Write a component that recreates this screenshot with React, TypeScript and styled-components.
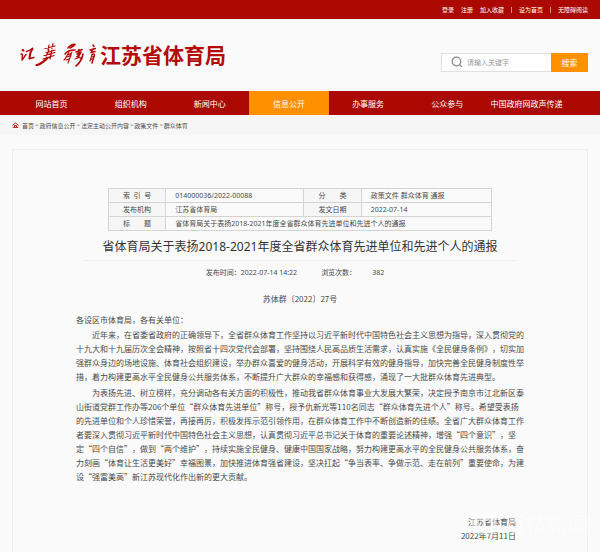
import React from "react";
import styled, { createGlobalStyle } from "styled-components";

const Global = createGlobalStyle`
  * { box-sizing: border-box; }
  html { background: #fafafa; overflow: hidden; }
  body {
    margin: 0;
    background: #fafafa;
    color: #4a4a4a;
    font-family: "Noto Sans", "Noto Sans CJK SC", sans-serif;
    font-size: 7px;
    text-spacing-trim: space-all;
  }
  a { color: inherit; text-decoration: none; }
`;

const TopBar = styled.div`
  display: flex;
  justify-content: flex-end;
  align-items: center;
  gap: 7px;
  height: 19px;
  padding-right: 12px;
  background: #aa0800;
  color: #fff;
  font-size: 6px;
`;

const Separator = styled.span`
  width: 1px;
  height: 6px;
  background: #d98b86;
`;

const Header = styled.header`
  display: flex;
  justify-content: space-between;
  align-items: center;
  height: 72px;
  padding: 0 12px 0 19px;
`;

const Brand = styled.a`
  && { color: #b40a08; }
  display: flex;
  align-items: center;
  gap: 4px;
`;

const BrandName = styled.span`
  font-size: 21px;
  line-height: 30px;
  font-weight: 700;
`;

const Search = styled.form`
  display: flex;
  height: 19px;
  margin-top: 14px;
`;

const SearchField = styled.label`
  display: flex;
  align-items: center;
  gap: 4px;
  width: 110px;
  padding-left: 9px;
  background: #fff;
  border: 1px solid #e0e0e0;
  border-right: 0;
`;

const SearchInput = styled.input`
  flex: 1;
  min-width: 0;
  padding: 0;
  border: 0;
  outline: 0;
  background: transparent;
  font: inherit;
  &::placeholder { color: #999; }
`;

const SearchButton = styled.button`
  width: 37px;
  padding: 0;
  border: 0;
  background: #ff9000;
  color: #fff;
  font-family: inherit;
  font-size: 8px;
`;

const Nav = styled.nav`
  display: flex;
  height: 24px;
  padding: 0 34px 0 12px;
  background: #aa0800;
`;

const NavLink = styled.a<{ $active?: boolean }>`
  && { color: #fff; }
  display: flex;
  flex: 1 1 0;
  min-width: 0;
  align-items: center;
  justify-content: center;
  background: ${(p) => (p.$active ? "#ff9000" : "transparent")};
  font-size: 8px;
  white-space: nowrap;
`;

const Breadcrumb = styled.nav`
  display: flex;
  align-items: center;
  gap: 1px;
  height: 20px;
  padding: 0 12px;
  background: #f6f6f6;
  font-size: 6px;
  svg { margin-right: 2px; }
`;

const Panel = styled.main`
  display: flex;
  flex-direction: column;
  align-items: center;
  margin: 14px 12px 0;
  padding: 38px 20px 20px;
  border: 1px solid #eee;
`;

const InfoTable = styled.table`
  width: 72%;
  table-layout: fixed;
  border-collapse: collapse;
  line-height: 13px;
  th, td { padding: 0; border: 1px solid #d4d4d4; }
  th { background: #f6f6f6; font-weight: 400; white-space: pre; }
  td { padding-left: 9px; }
`;

const Col = styled.col<{ $share: number }>`
  width: ${(p) => p.$share}%;
`;

const Title = styled.h1`
  width: 81%;
  margin: 6px 0 0;
  padding-bottom: 3px;
  border-bottom: 1px solid #eee;
  color: #333;
  font-size: 12px;
  line-height: 20px;
  font-weight: 400;
  text-align: center;
  white-space: nowrap;
`;

const Meta = styled.div`
  display: flex;
  gap: 24px;
  margin-top: 6px;
  padding-right: 10px;
  line-height: 12px;
`;

const Views = styled.span`
  display: flex;
  gap: 16px;
`;

const Article = styled.article`
  margin-top: 13px;
  font-family: "Noto Sans CJK SC", sans-serif;
  font-size: 8px;
  line-height: 14px;
`;

const DocNumber = styled.p`
  margin: 0 0 7px;
  text-align: center;
`;

const Paragraph = styled.p<{ $indent?: boolean }>`
  margin: 0 0 1px;
  text-indent: ${(p) => (p.$indent ? "2em" : "0")};
  & + & { margin-bottom: 2px; }
  span { display: block; white-space: nowrap; }
  span + span { text-indent: 0; }
`;

const Signature = styled.div`
  margin-top: 31px;
  padding-right: 8px;
  text-align: right;
`;

const Watermark = styled.div`
  position: fixed;
  right: 11px;
  bottom: 16px;
  display: flex;
  align-items: center;
  gap: 8px;
  color: rgba(255, 255, 255, 0.45);
  font-size: 21px;
  line-height: 24px;
  font-weight: 700;
  pointer-events: none;
`;

const Calligraphy = () => (
  <svg width="77" height="26" viewBox="0 0 77 26" fill="none" stroke="currentColor" strokeLinecap="round" strokeLinejoin="round" aria-hidden="true">
    <path strokeWidth="2" d="M3.500 8l1 .5M13.500 6.500c-2 3-3 6-3 10" />
    <path strokeWidth="1.400" d="M2 12l1.500.5-.5 5.500c1-1 2-3 4-5.500M7.500 9.500c2-.5 4-1.500 6-3M10.500 16.500l4.500-1" />
    <path strokeWidth="1.200" d="M26 6.500l10-2.500M30 3l-1 5M34 1.500l-1 5M27 10.500c3 0 6-2 9-2.500M30 8l-3 6M25 13.500l11-3M24 17l11-3.500M33 8l-2 9" />
    <path strokeWidth="2.200" d="M17.500 23c4-.5 7-3.500 11-7" />
    <path strokeWidth="1.600" d="M49 6c1-2 5-4 7-3.500-1 1.500-3 2.500-5 3.500M46 12c2-3 7-4 10-4M57 10l6-2.500M58 12l4-2-2 4-2 .5M60 7.500l-1 8M64 12c-1 5-3 9-7 12" />
    <path strokeWidth="1.100" d="M50 10c-2 3-3 6-5 8M49 13c2-2 4-2 3 0l-3 8M48 15l3-1M47 18l3-1M53 10l-2 3M56 17l5-2M61 16l2 1" />
    <path strokeWidth="1.500" d="M74 3l1 1.500M71 8l5.500-1.500M74 7l-2 3.500 4-1M73 12.500c2-1 3-1 2 2l-2 6.500" />
    <path strokeWidth="1.100" d="M73 13l-2 6M73 15l2-.5M72 17.500l2-.5" />
  </svg>
);

const nav = ["网站首页", "组织机构", "新闻中心", "信息公开", "办事服务", "公众参与", "中国政府网政声传递"];
const crumbs = ["首页", "政府信息公开", "法定主动公开内容", "政策文件", "群众体育"];

const paragraphs = [
  ["各设区市体育局，各有关单位："],
  [
    "近年来，在省委省政府的正确领导下，全省群众体育工作坚持以习近平新时代中国特色社会主义思想为指导，深入贯彻党的",
    "十九大和十九届历次全会精神，按照省十四次党代会部署，坚持围绕人民高品质生活需求，认真实施《全民健身条例》，切实加",
    "强群众身边的场地设施、体育社会组织建设，举办群众喜爱的健身活动，开展科学有效的健身指导，加快完善全民健身制度性举",
    "措，着力构建更高水平全民健身公共服务体系，不断提升广大群众的幸福感和获得感，涌现了一大批群众体育先进典型。",
  ],
  [
    "为表扬先进、树立榜样，充分调动各有关方面的积极性，推动我省群众体育事业大发展大繁荣，决定授予南京市江北新区泰",
    "山街道党群工作办等206个单位“群众体育先进单位”称号，授予仇新光等110名同志“群众体育先进个人”称号。希望受表扬",
    "的先进单位和个人珍惜荣誉，再接再厉，积极发挥示范引领作用，在群众体育工作中不断创造新的佳绩。全省广大群众体育工作",
    "者要深入贯彻习近平新时代中国特色社会主义思想，认真贯彻习近平总书记关于体育的重要论述精神，增强“四个意识”，坚",
    "定“四个自信”，做到“两个维护”，持续实施全民健身、健康中国国家战略，努力构建更高水平的全民健身公共服务体系，奋",
    "力刻画“体育让生活更美好”幸福图景，加快推进体育强省建设，坚决扛起“争当表率、争做示范、走在前列”重要使命，为建",
    "设“强富美高”新江苏现代化作出新的更大贡献。",
  ],
];

export default function App() {
  return (
    <div lang="zh-CN">
      <Global />
      <TopBar>
        <a href="#login">登录</a>
        <a href="#register">注册</a>
        <a href="#favorite">加入收藏</a>
        <Separator />
        <a href="#home">设为首页</a>
        <Separator />
        <a href="#accessible">无障碍阅读</a>
      </TopBar>
      <Header>
        <Brand href="#">
          <Calligraphy />
          <BrandName>江苏省体育局</BrandName>
        </Brand>
        <Search onSubmit={(e) => e.preventDefault()}>
          <SearchField>
            <svg width="12" height="12" viewBox="0 0 12 12" fill="none" stroke="#888" strokeWidth="1.200" aria-hidden="true">
              <circle cx="5.500" cy="5.500" r="4.300" />
              <path d="M8.600 8.600l2.400 2.200" />
            </svg>
            <SearchInput type="text" aria-label="请输入关键字" placeholder="请输入关键字" />
          </SearchField>
          <SearchButton type="submit">搜索</SearchButton>
        </Search>
      </Header>
      <Nav>
        {nav.map((item) => (
          <NavLink key={item} href="#" $active={item === "信息公开"}>{item}</NavLink>
        ))}
      </Nav>
      <Breadcrumb>
        <svg width="7" height="6" viewBox="0 0 7 6" fill="none" stroke="#c0181a" aria-hidden="true">
          <path d="M.4 3.600L3.500.8l3.100 2.800M.8 5.400h5.400M2.500 5.400V3.600h2v1.800" />
        </svg>
        {crumbs.map((item, i) => (
          <React.Fragment key={item}>
            {i > 0 && <span>&gt;</span>}
            <a href="#">{item}</a>
          </React.Fragment>
        ))}
      </Breadcrumb>
      <Panel>
        <InfoTable>
          <colgroup>
            <Col $share={15} />
            <Col $share={36} />
            <Col $share={15} />
            <Col $share={34} />
          </colgroup>
          <tbody>
            <tr>
              <th scope="row">{"索  引  号"}</th>
              <td>014000036/2022-00088</td>
              <th scope="row">{"分　　类"}</th>
              <td>政策文件 群众体育 通报</td>
            </tr>
            <tr>
              <th scope="row">发布机构</th>
              <td>江苏省体育局</td>
              <th scope="row">发文日期</th>
              <td>2022-07-14</td>
            </tr>
            <tr>
              <th scope="row">{"标　　题"}</th>
              <td colSpan={3}>省体育局关于表扬2018-2021年度全省群众体育先进单位和先进个人的通报</td>
            </tr>
          </tbody>
        </InfoTable>
        <Title>省体育局关于表扬2018-2021年度全省群众体育先进单位和先进个人的通报</Title>
        <Meta>
          <span>发布时间：2022-07-14 14:22</span>
          <Views><span>浏览次数：</span><span>382</span></Views>
        </Meta>
        <Article>
          <DocNumber>苏体群〔2022〕27号</DocNumber>
          {paragraphs.map((lines, i) => (
            <Paragraph key={i} $indent={i > 0}>
              {lines.map((line) => <span key={line}>{line}</span>)}
            </Paragraph>
          ))}
          <Signature>
            <div>江苏省体育局</div>
            <div>2022年7月11日</div>
          </Signature>
        </Article>
      </Panel>
      <Watermark aria-hidden="true">
        <svg width="25" height="20" viewBox="0 0 25 20" fill="currentColor">
          <path fillRule="evenodd" d="M5 0h15a5 5 0 015 5v10a5 5 0 01-5 5H5a5 5 0 01-5-5V5a5 5 0 015-5zM7 6v8l5-4zM14 6v8l5-4z" />
        </svg>
        <span>荔枝新闻</span>
      </Watermark>
    </div>
  );
}
